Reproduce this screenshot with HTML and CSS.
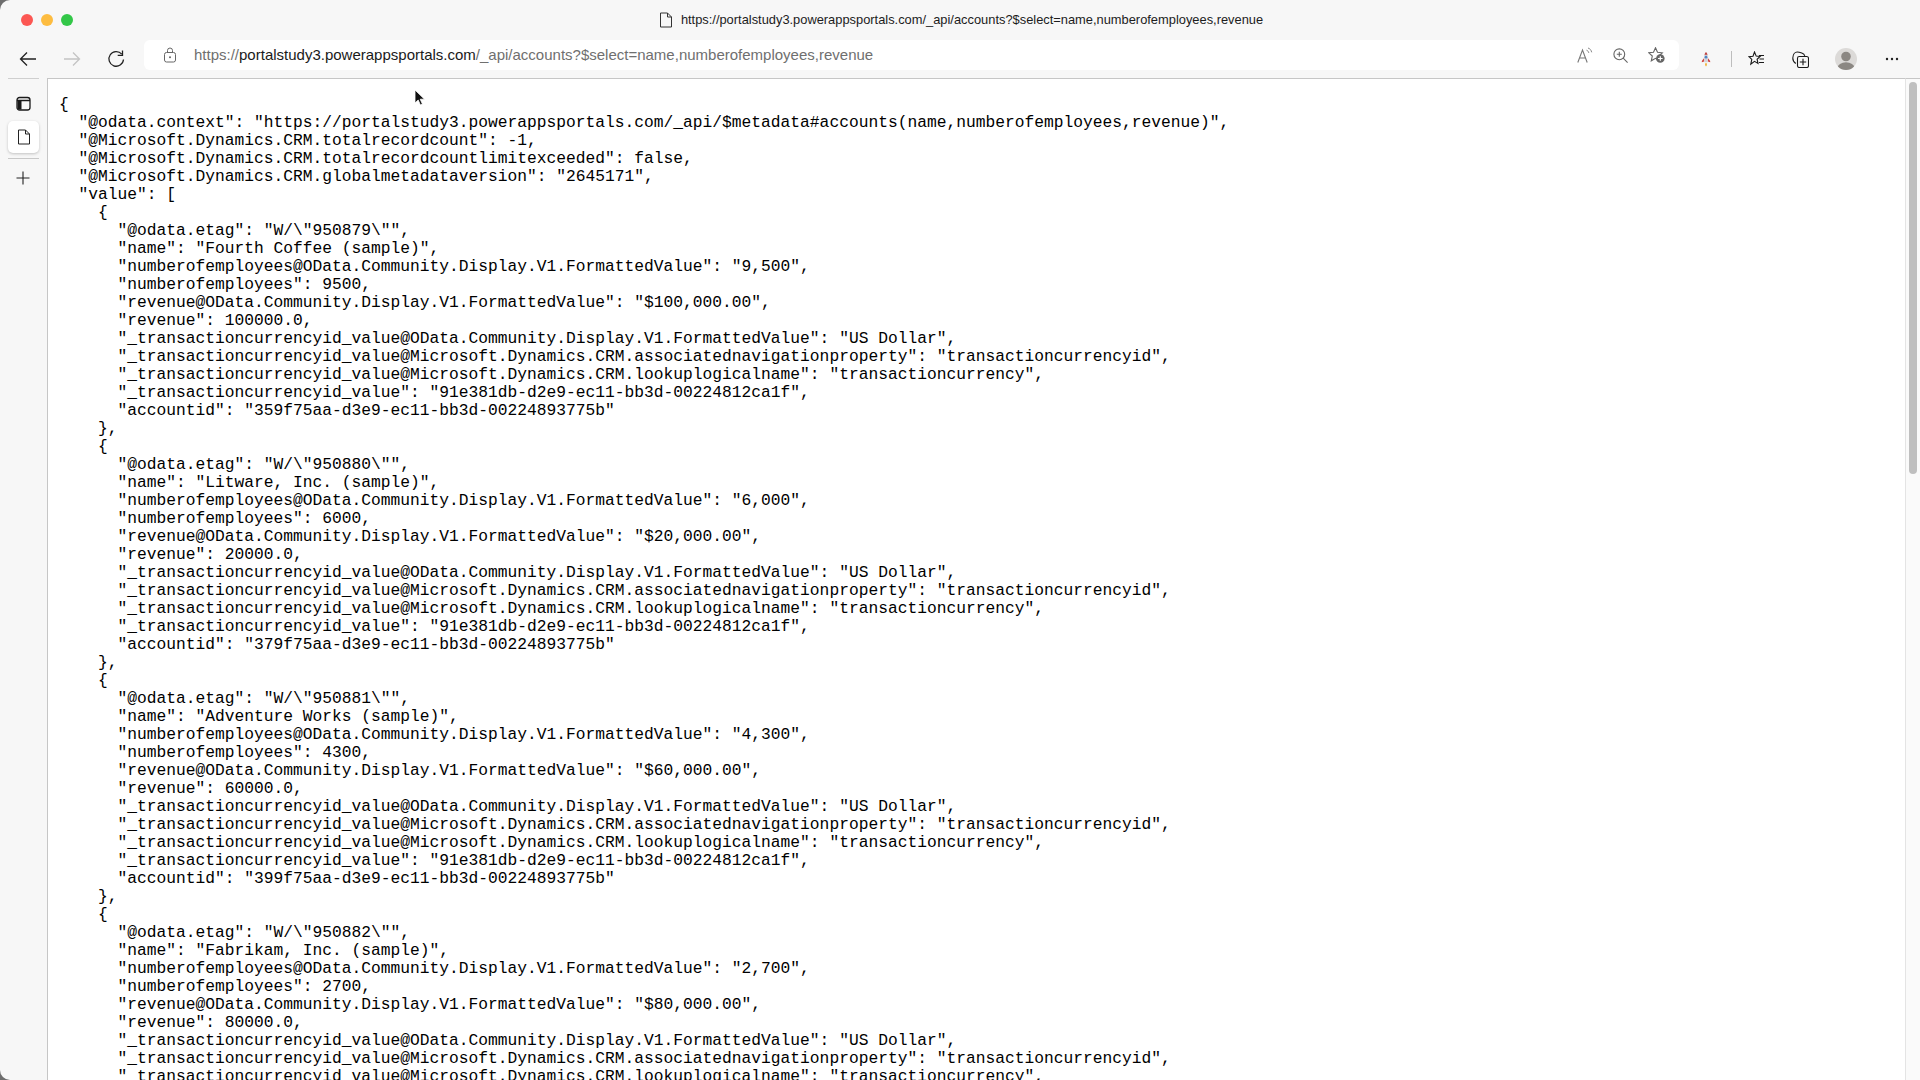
FILE: index.html
```html
<!DOCTYPE html>
<html lang="en">
<head>
<meta charset="utf-8">
<title>accounts</title>
<link rel="stylesheet" href="styles.css">
</head>
<body>
<div class="window">
  <header class="titlebar">
    <div class="lights"><span class="light red"></span><span class="light amber"></span><span class="light green"></span></div>
    <div class="title">
      <svg class="title-icon" viewBox="0 0 14 16" width="14" height="16"><path d="M1.500 1h7l4 4v10h-11z M8.500 1v4h4" fill="none" stroke="#333" stroke-width="1"/></svg>
      <span>https://portalstudy3.powerappsportals.com/_api/accounts?$select=name,numberofemployees,revenue</span>
    </div>
  </header>
  <nav class="toolbar">
    <div class="nav-buttons">
      <svg class="nav-icon" viewBox="0 0 20 20" width="20" height="20"><path d="M18 10H2.500M9 3.500 2.500 10 9 16.500" fill="none" stroke="#222" stroke-width="1.300"/></svg>
      <svg class="nav-icon" viewBox="0 0 20 20" width="20" height="20"><path d="M2 10h15.500M11 3.500l6.500 6.500-6.500 6.500" fill="none" stroke="#c4c4c4" stroke-width="1.300"/></svg>
      <svg class="nav-icon" viewBox="0 0 20 20" width="20" height="20"><path d="M15.800 5.200A7.300 7.300 0 1 0 17.500 10.500" fill="none" stroke="#222" stroke-width="1.300"/><path d="M16.500 1.500v4.800h-4.800" fill="none" stroke="#222" stroke-width="1.300"/></svg>
    </div>
    <div class="address">
      <svg class="lock" viewBox="0 0 14 16" width="14" height="16"><rect x="1.500" y="5.500" width="11" height="9.500" rx="2" fill="none" stroke="#666" stroke-width="1"/><path d="M4.500 5.500V3.500a2.500 2.500 0 0 1 5 0v2" fill="none" stroke="#666" stroke-width="1"/><circle cx="7" cy="10.300" r="1" fill="#666"/></svg>
      <span class="url"><span class="url-dim">https://</span><span class="url-host">portalstudy3.powerappsportals.com</span><span class="url-dim">/_api/accounts?$select=name,numberofemployees,revenue</span></span>
      <div class="address-icons">
        <svg viewBox="0 0 16 16" width="16" height="16"><path d="M.800 15.500 5.500 3 10.200 15.500M2.300 11h6.400" fill="none" stroke="#777" stroke-width="1.100"/><path d="M9.500 3.200c1.300.4 2 1.300 2.300 2.700M11 1c1.900 .6 3.200 2 3.700 4.300" fill="none" stroke="#888" stroke-width="1"/></svg>
        <svg viewBox="0 0 15 15" width="15" height="15"><circle cx="6.300" cy="6.300" r="5.400" fill="none" stroke="#666" stroke-width="1.100"/><path d="M10.200 10.200 14.600 14.600M6.300 3.800v5M3.800 6.300h5" fill="none" stroke="#666" stroke-width="1.100"/></svg>
        <svg viewBox="0 0 17 16" width="17" height="16"><path d="M7.500 .8 9.500 5.300l4.800 .5-3.600 3.200 1 4.800-4.200-2.500-4.200 2.500 1-4.800L.8 5.800l4.700-.5z" fill="none" stroke="#666" stroke-width="1.100"/><circle cx="12.300" cy="11.500" r="4.300" fill="#666"/><path d="M12.300 9.200v4.600M10 11.500h4.600" stroke="#fff" stroke-width="1.200"/></svg>
      </div>
    </div>
    <div class="tools">
      <svg class="rocket" viewBox="0 0 12 18" width="10" height="16"><path d="M6 13.500c-1.400 1-1.300 2.800 0 4.500 1.300-1.700 1.400-3.500 0-4.500z" fill="#f0a820"/><path d="M3.500 8 1 11.500v1.500l2.800-1zM8.500 8 11 11.500v1.500l-2.800-1z" fill="#d2443e"/><path d="M6 .5C4.200 2.500 3.500 5 3.500 8l.5 5h4l.5-5c0-3-.7-5.500-2.500-7.500z" fill="#d4d4da"/><path d="M6 .5C5.100 1.400 4.600 2.400 4.200 3.800h3.600C7.400 2.400 6.900 1.400 6 .5z" fill="#c23c38"/><circle cx="6" cy="6.800" r="1.600" fill="#4f86c6"/></svg>
      <span class="tool-sep"></span>
      <svg class="tool fav" viewBox="0 0 17 16" width="17" height="16"><path d="M6.500 1 8.200 5.100l3.900 .4-3 2.800.9 4.100-3.500-2.100-3.700 2.900 1-4.800L1 5.600l4-.4z" fill="none" stroke="#1a1a1a" stroke-width="1.100"/><path d="M11 4.500h5M11.500 8h4.500M11 11.500h5" stroke="#1a1a1a" stroke-width="1"/></svg>
      <svg class="tool coll" viewBox="0 0 17 17" width="17" height="17"><path d="M3.800 12.500C1.800 11 .7 9 .8 7 1 3.500 3 1 5.200 1c1.700 0 3 .4 4.600 .9 1.700 .5 2.600 1.300 3 3" fill="none" stroke="#1a1a1a" stroke-width="1.100"/><rect x="5.500" y="5.500" width="11" height="11" rx="1.800" fill="#f7f7f7" stroke="#1a1a1a" stroke-width="1.100"/><path d="M11 7.800v6.400M7.800 11h6.400" stroke="#1a1a1a" stroke-width="1.100"/></svg>
      <svg class="avatar" viewBox="0 0 22 22" width="22" height="22"><defs><clipPath id="avatar-clip"><circle cx="11" cy="11" r="11"/></clipPath></defs><circle cx="11" cy="11" r="11" fill="#dcdad8"/><g clip-path="url(#avatar-clip)" fill="#8b8782"><circle cx="11" cy="8.500" r="4.800"/><ellipse cx="11" cy="20" rx="8.500" ry="5.800"/></g></svg>
      <svg class="more" viewBox="0 0 14 4" width="14" height="4"><circle cx="2" cy="2" r="1.200" fill="#222"/><circle cx="7" cy="2" r="1.200" fill="#222"/><circle cx="12" cy="2" r="1.200" fill="#222"/></svg>
    </div>
  </nav>
  <div class="main">
    <aside class="sidebar">
      <svg class="side-icon" viewBox="0 0 16 16" width="16" height="16"><rect x="1" y="1.500" width="13" height="12.500" rx="2.500" fill="none" stroke="#1a1a1a" stroke-width="1.300"/><path d="M1 4.500h13" stroke="#1a1a1a" stroke-width="1.300"/><path d="M1.500 4.500h4v9h-2a2 2 0 0 1-2-2z" fill="#1a1a1a"/></svg>
      <div class="side-tab">
        <svg viewBox="0 0 14 16" width="14" height="16"><path d="M1.500 1h7l4 4v10h-11z M8.500 1v4h4" fill="none" stroke="#222" stroke-width="1"/></svg>
      </div>
      <svg class="side-plus" viewBox="0 0 14 14" width="14" height="14"><path d="M7 .5v13M.5 7h13" stroke="#222" stroke-width="1.100"/></svg>
    </aside>
    <main class="content"><pre class="json">{
  "@odata.context": "https://portalstudy3.powerappsportals.com/_api/$metadata#accounts(name,numberofemployees,revenue)",
  "@Microsoft.Dynamics.CRM.totalrecordcount": -1,
  "@Microsoft.Dynamics.CRM.totalrecordcountlimitexceeded": false,
  "@Microsoft.Dynamics.CRM.globalmetadataversion": "2645171",
  "value": [
    {
      "@odata.etag": "W/\"950879\"",
      "name": "Fourth Coffee (sample)",
      "numberofemployees@OData.Community.Display.V1.FormattedValue": "9,500",
      "numberofemployees": 9500,
      "revenue@OData.Community.Display.V1.FormattedValue": "$100,000.00",
      "revenue": 100000.0,
      "_transactioncurrencyid_value@OData.Community.Display.V1.FormattedValue": "US Dollar",
      "_transactioncurrencyid_value@Microsoft.Dynamics.CRM.associatednavigationproperty": "transactioncurrencyid",
      "_transactioncurrencyid_value@Microsoft.Dynamics.CRM.lookuplogicalname": "transactioncurrency",
      "_transactioncurrencyid_value": "91e381db-d2e9-ec11-bb3d-00224812ca1f",
      "accountid": "359f75aa-d3e9-ec11-bb3d-00224893775b"
    },
    {
      "@odata.etag": "W/\"950880\"",
      "name": "Litware, Inc. (sample)",
      "numberofemployees@OData.Community.Display.V1.FormattedValue": "6,000",
      "numberofemployees": 6000,
      "revenue@OData.Community.Display.V1.FormattedValue": "$20,000.00",
      "revenue": 20000.0,
      "_transactioncurrencyid_value@OData.Community.Display.V1.FormattedValue": "US Dollar",
      "_transactioncurrencyid_value@Microsoft.Dynamics.CRM.associatednavigationproperty": "transactioncurrencyid",
      "_transactioncurrencyid_value@Microsoft.Dynamics.CRM.lookuplogicalname": "transactioncurrency",
      "_transactioncurrencyid_value": "91e381db-d2e9-ec11-bb3d-00224812ca1f",
      "accountid": "379f75aa-d3e9-ec11-bb3d-00224893775b"
    },
    {
      "@odata.etag": "W/\"950881\"",
      "name": "Adventure Works (sample)",
      "numberofemployees@OData.Community.Display.V1.FormattedValue": "4,300",
      "numberofemployees": 4300,
      "revenue@OData.Community.Display.V1.FormattedValue": "$60,000.00",
      "revenue": 60000.0,
      "_transactioncurrencyid_value@OData.Community.Display.V1.FormattedValue": "US Dollar",
      "_transactioncurrencyid_value@Microsoft.Dynamics.CRM.associatednavigationproperty": "transactioncurrencyid",
      "_transactioncurrencyid_value@Microsoft.Dynamics.CRM.lookuplogicalname": "transactioncurrency",
      "_transactioncurrencyid_value": "91e381db-d2e9-ec11-bb3d-00224812ca1f",
      "accountid": "399f75aa-d3e9-ec11-bb3d-00224893775b"
    },
    {
      "@odata.etag": "W/\"950882\"",
      "name": "Fabrikam, Inc. (sample)",
      "numberofemployees@OData.Community.Display.V1.FormattedValue": "2,700",
      "numberofemployees": 2700,
      "revenue@OData.Community.Display.V1.FormattedValue": "$80,000.00",
      "revenue": 80000.0,
      "_transactioncurrencyid_value@OData.Community.Display.V1.FormattedValue": "US Dollar",
      "_transactioncurrencyid_value@Microsoft.Dynamics.CRM.associatednavigationproperty": "transactioncurrencyid",
      "_transactioncurrencyid_value@Microsoft.Dynamics.CRM.lookuplogicalname": "transactioncurrency",
</pre></main>
    <div class="scrollbar"><div class="thumb"></div></div>
  </div>
  <svg class="cursor" viewBox="0 0 12 18" width="12" height="18"><path d="M1 1v13l3.200-3 2.200 5 2-1-2.200-4.800H10.500z" fill="#111" stroke="#fff" stroke-width=".8"/></svg>
</div>
</body>
</html>
```
FILE: styles.css
```css
* { box-sizing: border-box; }
html, body { margin: 0; height: 100%; overflow: hidden; background: #6e6e6e; }
.window {
  position: relative;
  width: 1920px;
  height: 1080px;
  display: flex;
  flex-direction: column;
  background: #f7f7f7;
  border-radius: 10px 0 0 10px;
  overflow: hidden;
  font-family: "Liberation Sans", Arial, sans-serif;
}
.titlebar {
  position: relative;
  height: 40px;
  flex: none;
  display: flex;
  align-items: center;
  justify-content: center;
  padding: 0 0 1px 2px;
}
.lights {
  position: absolute;
  left: 21px;
  top: 14px;
  display: flex;
  gap: 8px;
}
.light { width: 12px; height: 12px; border-radius: 50%; }
.red { background: #fc5753; }
.amber { background: #fdbc40; }
.green { background: #33c748; }
.title {
  display: flex;
  align-items: center;
  gap: 8px;
  font-size: 12.86px;
  color: #1c1c1c;
}
.toolbar {
  height: 38px;
  flex: none;
  display: flex;
  align-items: flex-start;
  padding-left: 18px;
}
.nav-buttons { display: flex; gap: 24px; padding-top: 9px; width: 126px; flex: none; }
.address {
  width: 1535px;
  height: 30px;
  flex: none;
  display: flex;
  align-items: center;
  background: #fff;
  border-radius: 6px;
  padding-left: 19px;
  padding-right: 14px;
}
.lock { flex: none; margin-right: 17px; }
.url { font-size: 15px; flex: 1; white-space: nowrap; padding-bottom: 2px; }
.url-dim { color: #6f6f6f; }
.url-host { color: #1a1a1a; }
.address-icons { display: flex; align-items: center; gap: 20px; }
.tools { display: flex; align-items: center; height: 38px; flex: 1; padding-left: 22px; }
.rocket { flex: none; }
.tool-sep { width: 1px; height: 16px; background: #bdbdbd; margin: 0 16px 0 20px; }
.tool { flex: none; }
.fav { margin-right: 27px; }
.coll { margin-right: 26px; }
.avatar { flex: none; margin-right: 28px; }
.more { flex: none; }
.main { flex: 1; display: flex; min-height: 0; }
.sidebar {
  position: relative;
  width: 48px;
  flex: none;
  display: flex;
  flex-direction: column;
  align-items: center;
}
.sidebar::before {
  content: "";
  position: absolute;
  left: 8px;
  top: 0;
  width: 31px;
  height: 1px;
  background: #cfcfcf;
}
.side-icon { margin-top: 18px; margin-left: -1px; }
.side-tab {
  width: 31px;
  height: 32px;
  margin-top: 9px;
  margin-left: -1px;
  display: flex;
  align-items: center;
  justify-content: center;
  background: #fff;
  border-radius: 5px;
  box-shadow: 0 1px 3px rgba(0, 0, 0, .22);
}
.side-plus { margin-top: 18px; margin-left: -2px; }
.sidebar::after {
  content: "";
  position: absolute;
  left: 8px;
  top: 80px;
  width: 31px;
  height: 1px;
  background: #c8c8c8;
}
.content {
  flex: 1;
  min-width: 0;
  background: #fff;
  border-top: 1px solid #c6c6c6;
  border-left: 1px solid #c6c6c6;
  overflow: hidden;
  padding: 17px 0 0 11px;
  margin-left: -1px;
}
.json {
  margin: 0;
  font-family: "Liberation Mono", "Courier New", monospace;
  font-size: 16.25px;
  line-height: 18px;
  color: #000;
}
.scrollbar {
  position: relative;
  width: 15px;
  flex: none;
  background: #fafafa;
  border-top: 1px solid #c6c6c6;
  border-left: 1px solid #e4e4e4;
}
.thumb {
  position: absolute;
  left: 3px;
  top: 3px;
  width: 8px;
  height: 392px;
  background: #bfbfbf;
  border-radius: 4px;
}
.cursor { position: absolute; left: 414px; top: 89px; }
```
